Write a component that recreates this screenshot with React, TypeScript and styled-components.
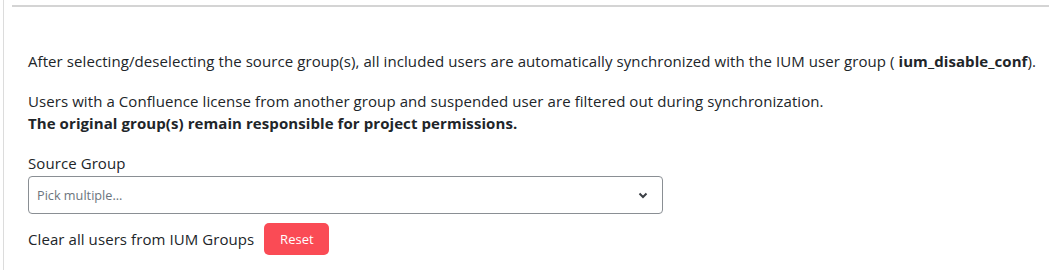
import React from "react";
import styled, { createGlobalStyle } from "styled-components";

const Global = createGlobalStyle`
  html, body { margin: 0; padding: 0; background: #fff; }
  body { font-family: "Open Sans", "Noto Sans", sans-serif; color: #212529; }
`;

const Frame = styled.div`
  margin-left: 3px;
  border-left: 1px solid #dcdcdc;
  height: 270px;
  box-sizing: border-box;
  padding-top: 5px;
`;

const TopRule = styled.div`
  margin-left: 8px;
  height: 2px;
  background: #d4d4d4;
`;

const Content = styled.div`
  padding: 43px 0 0 24px;
  display: flex;
  flex-direction: column;
`;

const Para = styled.p<{ $mb?: number }>`
  margin: 0 0 ${(p) => p.$mb ?? 0}px 0;
  font-size: 15px;
  line-height: 22px;
  letter-spacing: 0.08px;
`;

const Label = styled.label`
  font-size: 15px;
  line-height: 22px;
  letter-spacing: 0.08px;
  margin-bottom: 2px;
`;

const Select = styled.div`
  width: 635px;
  height: 38px;
  box-sizing: border-box;
  border: 1px solid #8a8f94;
  border-radius: 4px;
  display: flex;
  align-items: center;
  justify-content: space-between;
  padding: 0 14px 0 8px;
  font-size: 12.7px;
  color: #6c757d;
`;

const Row = styled.div`
  display: flex;
  align-items: center;
  gap: 10px;
  margin-top: 9px;
  font-size: 15px;
  letter-spacing: 0.08px;
`;

const ResetButton = styled.button`
  font-family: inherit;
  background: #fa4b55;
  color: #fff;
  border: none;
  border-radius: 5px;
  width: 65px;
  height: 32px;
  font-size: 13px;
  letter-spacing: 0;
`;

const Chevron = () => (
  <svg width="10" height="7" viewBox="0 0 10 7">
    <path d="M1.5 1.5 L5 5 L8.5 1.5" stroke="#3b3f45" strokeWidth="2" fill="none" />
  </svg>
);

export default function App() {
  return (
    <>
      <Global />
      <Frame>
        <TopRule />
        <Content>
          <Para $mb={18}>
            After selecting/deselecting the source group(s), all included users are automatically synchronized with the IUM user group ( <b>ium_disable_conf</b>).
          </Para>
          <Para>
            Users with a Confluence license from another group and suspended user are filtered out during synchronization.
          </Para>
          <Para $mb={18}>
            <b>The original group(s) remain responsible for project permissions.</b>
          </Para>
          <Label>Source Group</Label>
          <Select>
            <span>Pick multiple...</span>
            <Chevron />
          </Select>
          <Row>
            <span>Clear all users from IUM Groups</span>
            <ResetButton>Reset</ResetButton>
          </Row>
        </Content>
      </Frame>
    </>
  );
}
